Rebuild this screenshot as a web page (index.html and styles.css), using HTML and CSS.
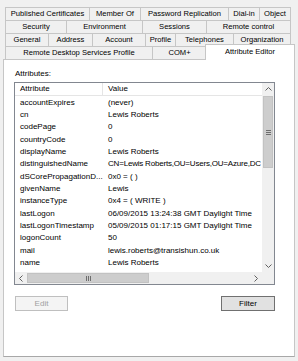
FILE: index.html
```html
<!DOCTYPE html>
<html lang="en">
<head>
    <meta charset="UTF-8">
    <title>Lewis Roberts Properties</title>
    <link rel="stylesheet" href="styles.css">
</head>
<body>
    <div class="tabs">
        <div class="tabrow">
            <span class="tab first w85">Published Certificates</span>
            <span class="tab w51">Member Of</span>
            <span class="tab w88">Password Replication</span>
            <span class="tab w31">Dial-in</span>
            <span class="tab w31">Object</span>
        </div>
        <div class="tabrow">
            <span class="tab first w62">Security</span>
            <span class="tab w76">Environment</span>
            <span class="tab w64">Sessions</span>
            <span class="tab w84">Remote control</span>
        </div>
        <div class="tabrow">
            <span class="tab first w44">General</span>
            <span class="tab w44">Address</span>
            <span class="tab w53">Account</span>
            <span class="tab w30">Profile</span>
            <span class="tab w58">Telephones</span>
            <span class="tab w57">Organization</span>
        </div>
        <div class="tabrow">
            <span class="tab first w148">Remote Desktop Services Profile</span>
            <span class="tab w54">COM+</span>
            <span class="tab selected">Attribute Editor</span>
        </div>
    </div>

    <div class="panel">
        <div class="label">Attributes:</div>
        <div class="listview">
            <div class="list">
                <div class="head">
                    <span class="col1">Attribute</span>
                    <span class="col2">Value</span>
                </div>
                <div class="rows">
                    <div class="row"><span class="col1">accountExpires</span><span class="col2">(never)</span></div>
                    <div class="row"><span class="col1">cn</span><span class="col2">Lewis Roberts</span></div>
                    <div class="row"><span class="col1">codePage</span><span class="col2">0</span></div>
                    <div class="row"><span class="col1">countryCode</span><span class="col2">0</span></div>
                    <div class="row"><span class="col1">displayName</span><span class="col2">Lewis Roberts</span></div>
                    <div class="row"><span class="col1">distinguishedName</span><span class="col2 tight">CN=Lewis Roberts,OU=Users,OU=Azure,DC</span></div>
                    <div class="row"><span class="col1">dSCorePropagationD...</span><span class="col2">0x0 = ( )</span></div>
                    <div class="row"><span class="col1">givenName</span><span class="col2">Lewis</span></div>
                    <div class="row"><span class="col1">instanceType</span><span class="col2">0x4 = ( WRITE )</span></div>
                    <div class="row"><span class="col1">lastLogon</span><span class="col2">06/09/2015 13:24:38 GMT Daylight Time</span></div>
                    <div class="row"><span class="col1">lastLogonTimestamp</span><span class="col2">05/09/2015 01:17:15 GMT Daylight Time</span></div>
                    <div class="row"><span class="col1">logonCount</span><span class="col2">50</span></div>
                    <div class="row"><span class="col1">mail</span><span class="col2">lewis.roberts@transishun.co.uk</span></div>
                    <div class="row"><span class="col1">name</span><span class="col2">Lewis Roberts</span></div>
                </div>
            </div>
            <div class="vscroll">
                <div class="arrow">
                    <svg width="7" height="4" viewBox="0 0 7 4"><path d="M0.5 3.5 L3.5 0.5 L6.5 3.5" fill="none" stroke="#606060" stroke-width="1"/></svg>
                </div>
                <div class="vtrack">
                    <div class="vthumb"><span class="grip-v"></span></div>
                </div>
                <div class="arrow">
                    <svg width="7" height="4" viewBox="0 0 7 4"><path d="M0.5 0.5 L3.5 3.5 L6.5 0.5" fill="none" stroke="#606060" stroke-width="1"/></svg>
                </div>
            </div>
            <div class="hscroll">
                <div class="arrow">
                    <svg width="4" height="7" viewBox="0 0 4 7"><path d="M3.5 0.5 L0.5 3.5 L3.5 6.5" fill="none" stroke="#606060" stroke-width="1"/></svg>
                </div>
                <div class="htrack">
                    <div class="hthumb"><span class="grip-h"></span></div>
                </div>
                <div class="arrow">
                    <svg width="4" height="7" viewBox="0 0 4 7"><path d="M0.5 0.5 L3.5 3.5 L0.5 6.5" fill="none" stroke="#606060" stroke-width="1"/></svg>
                </div>
            </div>
            <div class="corner"></div>
        </div>
        <div class="buttons">
            <button class="btn disabled">Edit</button>
            <button class="btn default">Filter</button>
        </div>
    </div>
</body>
</html>
```

FILE: styles.css
```css
*{
    box-sizing: border-box;
}
body{
    margin: 0;
    padding-top: 7px;
    background: #f0f0f0;
    font-family: "Liberation Sans", Arial, sans-serif;
    font-size: 8px;
    color: #000;
}
.tabs{
    margin-left: 5px;
}
.tabrow{
    display: flex;
    height: 13px;
}
.tab{
    height: 13px;
    line-height: 12px;
    font-size: 7.6px;
    text-align: center;
    white-space: nowrap;
    background: #f0f0f0;
    border-top: 1px solid #c6c6c6;
    border-right: 1px solid #c6c6c6;
}
.tab.first{
    border-left: 1px solid #c6c6c6;
}
.tab.selected{
    position: relative;
    z-index: 1;
    width: 90px;
    height: 16px;
    margin-top: -2px;
    margin-left: -2px;
    line-height: 14px;
    background: #fff;
    border-left: 1px solid #c6c6c6;
}
.w30{ width: 30px; }
.w31{ width: 31px; }
.w44{ width: 44px; }
.w51{ width: 51px; }
.w53{ width: 53px; }
.w54{ width: 54px; }
.w57{ width: 57px; }
.w58{ width: 58px; }
.w62{ width: 62px; }
.w64{ width: 64px; }
.w76{ width: 76px; }
.w84{ width: 84px; }
.w85{ width: 85px; }
.w88{ width: 88px; }
.w148{ width: 148px; }

.panel{
    margin-left: 3px;
    width: 292px;
    height: 298px;
    background: #fff;
    border: 1px solid #c6c6c6;
    border-bottom-color: #a8a8a8;
    padding: 8px 0 0 10px;
}
.label{
    height: 11px;
    line-height: 11px;
    padding-left: 1px;
}
.listview{
    margin-top: 3px;
    width: 261px;
    height: 203px;
    border: 1px solid #828790;
    display: grid;
    grid-template-columns: 247px 12px;
    grid-template-rows: 189px 12px;
}
.list{
    overflow: hidden;
}
.head{
    display: flex;
    height: 13px;
    line-height: 12px;
    border-bottom: 1px solid #e5e5e5;
}
.head .col1{
    border-right: 1px solid #e5e5e5;
}
.rows{
    padding-top: 0.5px;
}
.row{
    display: flex;
    height: 12.35px;
    line-height: 12.35px;
    white-space: nowrap;
}
.col1{
    flex: none;
    width: 88px;
    padding-left: 5px;
    overflow: hidden;
}
.col2{
    padding-left: 5px;
    white-space: nowrap;
}
.col2.tight{
    letter-spacing: -0.2px;
}

.vscroll{
    display: flex;
    flex-direction: column;
    background: #f0f0f0;
}
.arrow{
    flex: none;
    width: 12px;
    height: 12px;
    display: flex;
    align-items: center;
    justify-content: center;
}
.vtrack{
    flex: 1;
    padding-top: 1px;
}
.vthumb{
    margin: 0 1px;
    height: 72px;
    background: #cdcdcd;
    border: 1px solid #c2c2c2;
    display: flex;
    align-items: center;
    justify-content: center;
}
.grip-v{
    width: 5px;
    height: 5px;
    border-top: 1px solid #6d6d6d;
    border-bottom: 1px solid #6d6d6d;
    background: linear-gradient(#6d6d6d, #6d6d6d) center / 5px 1px no-repeat;
}
.hscroll{
    display: flex;
    background: #f0f0f0;
}
.htrack{
    flex: 1;
}
.hthumb{
    margin: 1px 0;
    width: 122px;
    height: 10px;
    background: #cdcdcd;
    border: 1px solid #c2c2c2;
    display: flex;
    align-items: center;
    justify-content: center;
}
.grip-h{
    width: 5px;
    height: 5px;
    border-left: 1px solid #6d6d6d;
    border-right: 1px solid #6d6d6d;
    background: linear-gradient(#6d6d6d, #6d6d6d) center / 1px 5px no-repeat;
}
.corner{
    background: #f0f0f0;
}

.buttons{
    display: flex;
    justify-content: space-between;
    width: 261px;
    margin-top: 11px;
    padding-left: 1px;
}
.btn{
    width: 53px;
    height: 15px;
    padding: 0;
    font-family: inherit;
    font-size: 8px;
    line-height: 13px;
    border: 1px solid #adadad;
    background: #e1e1e1;
    color: #000;
}
.btn.disabled{
    background: #f4f4f4;
    border-color: #bfbfbf;
    color: #a0a0a0;
}
.btn.default{
    width: 54px;
    border-color: #707070;
}
```
